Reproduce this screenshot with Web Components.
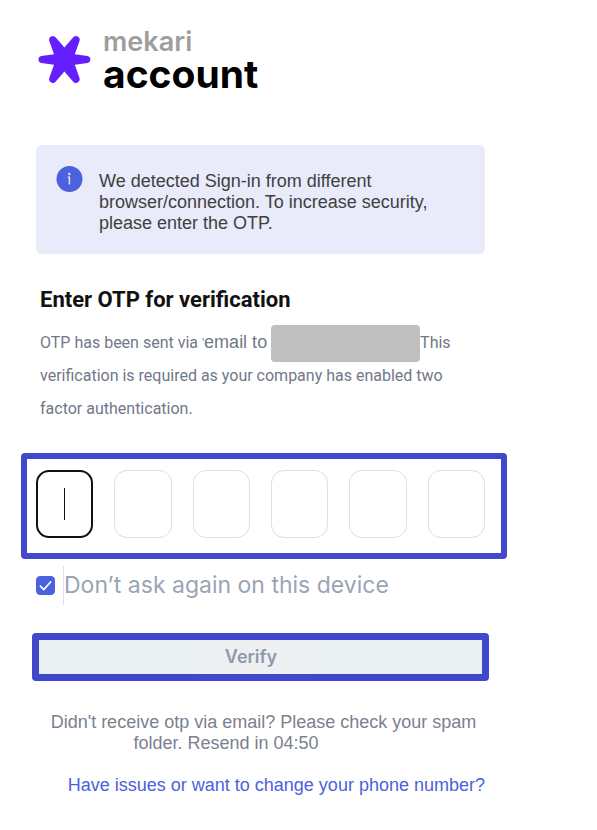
<!DOCTYPE html>
<html lang="en">
<head>
<meta charset="utf-8">
<title>Mekari Account</title>
<style>
body { margin: 0; background: #fff; font-family: Inter, "Liberation Sans", sans-serif; color: #111; }
</style>
</head>
<body>
<verify-page></verify-page>
<script>
const define = (name, html, setup) => customElements.define(name, class extends HTMLElement {
  constructor() {
    super();
    const t = document.createElement('template');
    t.innerHTML = html;
    this.attachShadow({ mode: 'open' }).append(t.content.cloneNode(true));
    if (setup) setup(this.shadowRoot);
  }
});

define('brand-logo', `
<style>
  :host { display: flex; align-items: flex-start; gap: 12px; margin-left: 1px; font-family: Inter, sans-serif; }
  svg { width: 54px; height: 50px; margin-top: 9px; flex: none; }
  .names { display: grid; }
  .brand { font-size: 27px; font-weight: 600; line-height: 32px; color: #9e9e9e; }
  .product { font-size: 39px; font-weight: 700; line-height: 32px; color: #000; }
</style>
<svg viewBox="0 0 54 50" aria-hidden="true">
  <path d="M27.4 12.5 L36 2.6 A3.7 3.7 0 0 1 42.5 5.9 L37.8 19.2 L50.5 20.9 A3.7 3.7 0 0 1 50.5 28.1 L37.8 29.8 L42.5 43.1 A3.7 3.7 0 0 1 36 46.4 L27.4 36.5 L18.8 46.4 A3.7 3.7 0 0 1 12.3 43.1 L17 29.8 L4.3 28.1 A3.7 3.7 0 0 1 4.3 20.9 L17 19.2 L12.3 5.9 A3.7 3.7 0 0 1 18.8 2.6 Z" fill="#651fff"/>
</svg>
<div class="names"><span class="brand">mekari</span><span class="product">account</span></div>`);

define('info-notice', `
<style>
  :host { display: flex; gap: 16px; padding: 20px; border-radius: 6px; background: #e9ebfa; color: #404040;
    font: 18px/21px "Liberation Sans", sans-serif; }
  svg { width: 27px; height: 27px; flex: none; }
  p { margin: 6px 0 0; }
</style>
<svg viewBox="0 0 27 27" aria-hidden="true">
  <circle cx="13.5" cy="14" r="13" fill="#4b61dd"/>
  <circle cx="13.3" cy="9" r="1.2" fill="#dfe4ff"/>
  <path d="M11.8 12.2h1.6v7.3" fill="none" stroke="#dfe4ff" stroke-width="1.5"/>
</svg>
<p><slot></slot></p>`);

define('otp-field', `
<style>
  :host { display: grid; grid-template-columns: repeat(6, minmax(0, 1fr)); gap: 21px;
    margin: 0 -22px 0 -15px; padding: 11px 16px 15px 9px; border: 6px solid #4048cc; border-radius: 4px; }
  input { box-sizing: border-box; width: 100%; height: 68px; margin: 0; padding: 0; text-align: center;
    border: 1px solid #dedede; border-radius: 13px; background: #fff; font: 24px Inter, sans-serif; outline: none; }
  input.current { border: 2px solid #111;
    background: linear-gradient(#111, #111) center / 1px 32px no-repeat #fff; }
</style>`, root => {
  for (let i = 1; i <= 6; i++) {
    const input = document.createElement('input');
    input.inputMode = 'numeric';
    input.maxLength = 1;
    input.setAttribute('aria-label', 'Digit ' + i);
    if (i === 1) input.className = 'current';
    root.append(input);
  }
});

define('device-check', `
<style>
  :host { display: flex; align-items: center; gap: 8px; height: 39px; }
  input { appearance: none; box-sizing: border-box; width: 19px; height: 19px; margin: 0; border-radius: 4px; flex: none; background: #fff; border: 1px solid #4b61dd; }
  input:checked { background: #4b61dd url("data:image/svg+xml,%3Csvg xmlns='http://www.w3.org/2000/svg' viewBox='0 0 17 17'%3E%3Cpath d='M3.4 9.2l3.3 3.4 6.9-7.6' fill='none' stroke='white' stroke-width='1.7' stroke-linecap='round' stroke-linejoin='round'/%3E%3C/svg%3E") center / 17px no-repeat; }
  label { font-size: 23px; line-height: 39px; color: #9aa4b5; border-left: 1px solid #dcdef5; white-space: nowrap; }
</style>
<input type="checkbox" id="remember" checked><label for="remember"><slot></slot></label>`);

define('verify-button', `
<style>
  :host { display: block; margin: 0 -4px; }
  button { display: flex; justify-content: center; width: 100%; padding: 0 15px 0 0; border: 7px solid #4048cc; border-radius: 4px;
    background: #eaeff2; color: #8f99ab; font: 600 18px/34px Inter, sans-serif; }
  span { width: 108px; padding-right: 4px; background: #eeeff0; }
</style>
<button type="button"><span><slot></slot></span></button>`);

define('verify-page', `
<style>
  :host { display: block; padding: 26px 112px 24px 36px; }
  main { display: flex; flex-direction: column; }
  info-notice { margin-top: 55px; }
  h1 { margin: 32px 0 0 4px; font: 700 22px/28px Roboto, sans-serif; color: #111; }
  .sent { margin: 12px 0 0 4px; font: 16px/33px Roboto, sans-serif; color: #707889; }
  .email { font: 18px "Liberation Sans", sans-serif; line-height: 1; }
  .tick { font-size: 12px; line-height: 1; }
  .hidden { display: inline-block; width: 149px; height: 37px; margin: -6px 0; border-radius: 4px; background: #bfbfbf; vertical-align: middle; }
  otp-field { margin-top: 28px; }
  device-check { margin-top: 7px; }
  verify-button { margin-top: 28px; }
  .resend { margin: 31px 0 0; font: 18px/21px "Liberation Sans", sans-serif; color: #7b818e; text-align: center; padding-left: 6px; }
  .resend span { display: block; padding-right: 75px; }
  a { align-self: flex-end; margin-top: 21px; font: 18px/21px "Liberation Sans", sans-serif; color: #4b61dd; text-decoration: none; white-space: nowrap; }
</style>
<main>
  <brand-logo></brand-logo>
  <info-notice>We detected Sign-in from different browser/connection. To increase security, please enter the OTP.</info-notice>
  <h1>Enter OTP for verification</h1>
  <p class="sent"><span>OTP has been sent via</span> <span class="tick">'</span><span class="email">email to</span> <span class="hidden"></span><span>This</span> <span>verification is required as your company has enabled two factor authentication.</span></p>
  <otp-field></otp-field>
  <device-check>Don’t ask again on this device</device-check>
  <verify-button>Verify</verify-button>
  <p class="resend">Didn't receive otp via email? Please check your spam <span>folder. Resend in 04:50</span></p>
  <a href="#">Have issues or want to change your phone number?</a>
</main>`);
</script>
</body>
</html>
